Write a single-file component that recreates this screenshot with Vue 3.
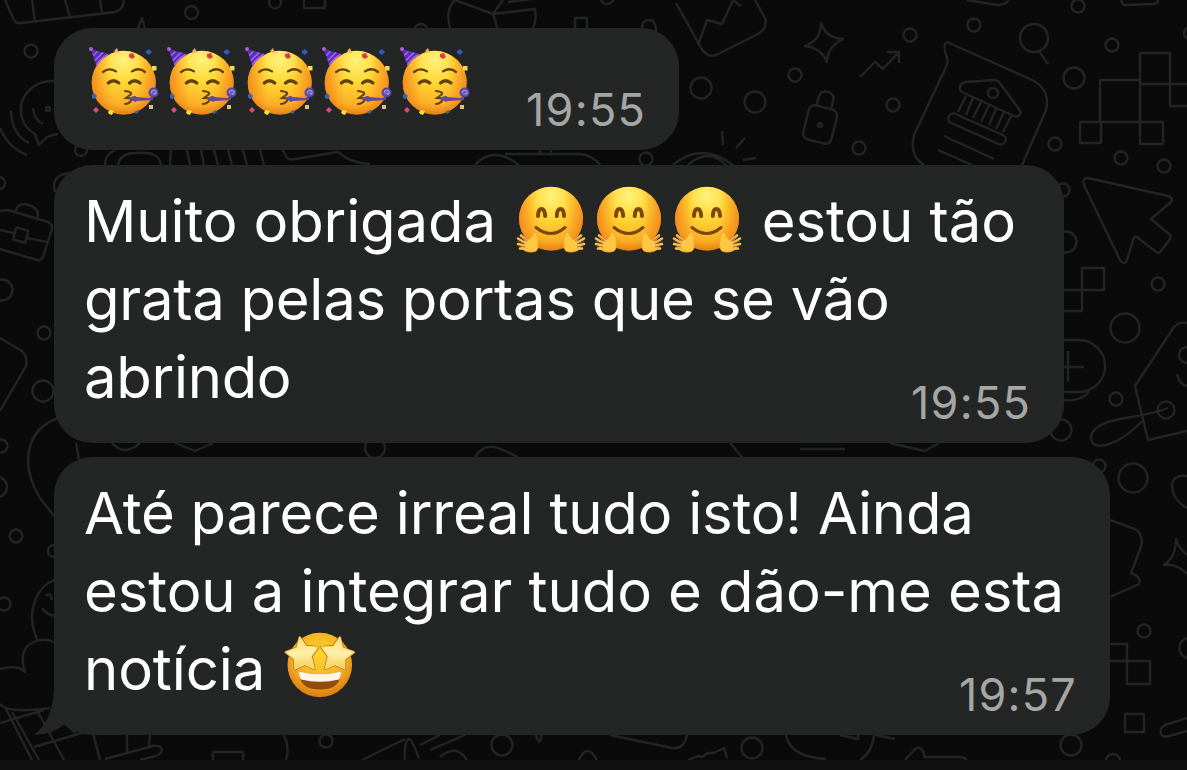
<template>
	<div class="chat">
		<svg class="wallpaper" viewBox="0 0 1187 770" aria-hidden="true">
			<circle v-for="(c, i) in rings" :key="'c' + i" :cx="c[0]" :cy="c[1]" :r="c[2]" />
			<path v-for="(d, i) in doodles" :key="'d' + i" :d="d" />
			<g transform="rotate(14 820 125)">
				<rect x="805.5" y="107" width="29" height="35" rx="6" />
				<path d="M812 107v-8q0-8 7.500-8t7.500 8v8" />
				<circle cx="820" cy="125" r="2" />
			</g>
			<rect x="946" y="124" width="62" height="10" rx="5" transform="rotate(24 977 129)" />
			<rect x="14.500" y="229" width="12.500" height="12.500" transform="rotate(15 21 235)" />
			<circle cx="48" cy="109" r="2" />
		</svg>

		<div class="messages">
			<div v-for="(msg, m) in messages" :key="m" class="bubble" :class="msg.size">
				<div class="text">
					<div v-for="(line, l) in msg.lines" :key="l" class="line">
						<template v-for="(part, p) in line" :key="p">
							<span v-if="part.text" :style="{ letterSpacing: part.space + 'px' }">{{ part.text }}</span>

							<svg v-else-if="part.emoji === 'party'" class="emoji party" viewBox="0 0 78 72">
								<circle cx="37.700" cy="36.700" r="32" fill="url(#face)" />
								<circle cx="37.700" cy="36.700" r="32" fill="url(#cheeks)" />
								<path d="M4.500 3 24 8.300Q15 12 10.700 20.500Z" fill="#5430b8" />
								<path d="M7.300 9.500l4-4M8.800 14.500l8.200-8M10.500 19q4-7 11.500-10.500" fill="none" stroke="#a862e8" stroke-width="1.700" />
								<circle cx="5" cy="3" r="2" fill="#b75bd8" />
								<g fill="none" stroke="#62410b" stroke-width="2.300" stroke-linecap="round">
									<path d="M17 26q6-5 13-.6M46 25.400q7-4.500 13 .6" />
									<path d="M22.300 37q5-4.500 10.500 0M43.500 37q5-4.500 10.500 0" stroke-width="3.300" />
									<path d="M39 45q9 1 5 4l-4 3q8 0 4 4-2 2-5 2" stroke-width="2" />
								</g>
								<path d="m42 52 7-2.200 1.500 1.200L63 52l4-2v4l-16 1-2 1Z" fill="#62489f" />
								<circle cx="67.500" cy="46.500" r="4" fill="#775bb1" stroke="#5148a8" stroke-width="2" />
								<path d="M65 47q0-3 3-3t2 4q-2 1-2-1" fill="none" stroke="#b099d4" />
								<path d="m28 5 3-3 2 5-4-1Z" fill="#efac58" />
								<path d="m43 8 4-1 2 4-3 2-3-2Z" fill="#d93e42" />
								<path d="m60 5 3-2 3 3-3 3-3-2Z" fill="#2e5bc1" />
								<path d="M66 20h4.500v4.500H66Z" fill="#f6dc49" />
								<path d="m6 49 2-2 3 3-2 3-3-1Z" fill="#3865b5" />
								<path d="m7 64 3-3 3 3-3 3Z" fill="#d54e77" />
								<path d="m22 66 2-2 4 1-2 4-3-1Z" fill="#f3df41" />
								<path d="M63 59h4v4h-4Z" fill="#e1bd83" />
								<path d="m48 66 4-2 1 2-3 2Z" fill="#47619b" />
							</svg>

							<svg v-else-if="part.emoji === 'hug'" class="emoji hug" viewBox="0 0 78 72">
								<circle cx="39" cy="34.700" r="32" fill="url(#face)" />
								<circle cx="39" cy="34.700" r="32" fill="url(#cheeks)" />
								<g fill="none" stroke="#7b4706" stroke-linecap="round">
									<path d="M26 32q.3-7 3.500-7t3.700 7M44.800 32q.3-7 3.600-7t3.600 7" stroke-width="4" />
									<path d="M24 43.500q15 12 29 0" stroke-width="3" />
								</g>
								<g v-for="side in [1, -1]" :key="side" :transform="side === 1 ? '' : 'translate(78 0) scale(-1 1)'">
									<path d="M14 57Q21 54 21 48q5 0 5 7 2 13-5 13-9 1-12-5Z" fill="#ffc440" stroke="#e99a20" stroke-width=".6" />
									<path d="M17 59 9 51.500M15 60 6 54.500M15 62 6 60M16 65l-8-.5" fill="none" stroke="#f8bd55" stroke-width="2.600" stroke-linecap="round" />
									<path d="m15 57-6-4M13 60l-7-3M13 63l-6-1" fill="none" stroke="#99621f" stroke-width=".8" />
									<path d="M15 57q6-1 7-8 4 1 3 8 1 9-4 9-6 1-8-3Z" fill="#ffc742" />
								</g>
							</svg>

							<svg v-else class="emoji star" viewBox="0 0 78 72">
								<circle cx="38.800" cy="37" r="32.300" fill="url(#starFace)" />
								<path d="M18 43.500q21 5 42 0 .5 18-21 18T18 43.500Z" fill="#914d0a" />
								<path d="M18 43.500q21 5 42 0 0 6-2 8-19 4.500-38 0-2-2-2-8Z" fill="#fff6e8" />
								<g v-for="side in [1, -1]" :key="side" :transform="side === 1 ? '' : 'translate(77.600 0) scale(-1 1)'">
									<path
										d="m18.700 9.300 6.500 9 11.800.9-6.700 9.200 2.900 12.200-9.800-4.200-9.400 4.600-.3-9.800-9-7 11.200-4.300Z"
										fill="url(#stars)" stroke="#a86a0e" stroke-width="2.600" stroke-linejoin="round"
									/>
									<path
										d="m18.700 9.300 6.500 9 11.800.9-6.700 9.200 2.900 12.200-9.800-4.200-9.400 4.600-.3-9.800-9-7 11.200-4.300Z"
										fill="url(#stars)" stroke="#ffe083" stroke-width="1.300" stroke-linejoin="round"
									/>
								</g>
							</svg>
						</template>
					</div>
				</div>
				<span class="time">{{ msg.time }}</span>
				<svg v-if="msg.tail" class="tail" viewBox="0 0 42 50">
					<path d="M20 0Q20 35 0 49.500q17 1 30-10l12 10V0Z" />
				</svg>
			</div>
		</div>
		<div class="bottom-bar"></div>

		<svg class="defs" width="0" height="0">
			<defs>
				<radialGradient id="face" cx=".5" cy=".15" r=".87">
					<stop offset="0" stop-color="#fff27b" />
					<stop offset=".4" stop-color="#ffd835" />
					<stop offset=".8" stop-color="#fbae26" />
					<stop offset="1" stop-color="#e27c12" />
				</radialGradient>
				<linearGradient id="cheeks">
					<stop offset="0" stop-color="#f06f12" stop-opacity=".6" />
					<stop offset=".3" stop-color="#f77b16" stop-opacity="0" />
					<stop offset=".7" stop-color="#f77b16" stop-opacity="0" />
					<stop offset="1" stop-color="#f06f12" stop-opacity=".6" />
				</linearGradient>
				<radialGradient id="starFace" cx=".5" cy=".35" r=".65">
					<stop offset="0" stop-color="#ffd52d" />
					<stop offset=".65" stop-color="#f4ae24" />
					<stop offset="1" stop-color="#d97a10" />
				</radialGradient>
				<linearGradient id="stars" x2="0" y2="1">
					<stop offset="0" stop-color="#ffdf70" />
					<stop offset=".5" stop-color="#fff1ac" />
					<stop offset="1" stop-color="#f7ca55" />
				</linearGradient>
			</defs>
		</svg>
	</div>
</template>

<script setup>
const party = { emoji: 'party' }
const hug = { emoji: 'hug' }

const messages = [
	{ size: 'short', time: '19:55', lines: [[party, party, party, party, party]] },
	{
		size: 'medium',
		time: '19:55',
		lines: [
			[{ text: 'Muito obrigada ', space: -0.12 }, hug, hug, hug, { text: ' estou tão', space: -0.08 }],
			[{ text: 'grata pelas portas que se vão', space: -0.26 }],
			[{ text: 'abrindo', space: -0.3 }]
		]
	},
	{
		size: 'large',
		time: '19:57',
		tail: true,
		lines: [
			[{ text: 'Até parece irreal tudo isto! Ainda', space: -0.2 }],
			[{ text: 'estou a integrar tudo e dão-me esta', space: -0.07 }],
			[{ text: 'notícia ', space: -0.1 }, { emoji: 'star' }]
		]
	}
]

// x, y, radius
const rings = [
	[191.5, 12.5, 6.5], [275, 2.5, 6], [31, 51, 6.5], [81, 150, 6], [421, 31, 7], [607, -3, 7],
	[701, 88, 10.5], [755, 102, 10.5], [795, 75, 6.5], [646, 159, 6.5], [910, 35, 6.5],
	[974, 25, 6.5], [893, 105, 6.5], [859, 148, 6.5], [1034, 38, 14], [1074, 78, 10.5],
	[1112, 45, 6.5], [1078, 6, 6.5], [1055, 144, 6.5], [1121, 158, 6.5], [1164, 166, 6.5],
	[1063, 190, 6.5], [1066, 242, 10.5], [993, 93, 5], [1158, 284, 6.5], [1125, 328, 14.5],
	[1116, 399, 6.5], [1166, 410, 8.5], [1061, 430, 10.5], [1099, 466, 6.5], [1133, 478, 14.5],
	[1187, 355, 8], [1144, 631, 6.5], [1190, 648, 10.5], [1071, 745, 10.5], [1113, 761, 7],
	[-1, 183, 6], [2, 290, 10.5], [44, 333, 6.5], [43, 391, 10.5], [1, 446, 6.5], [16, 536, 6.5],
	[-3, 487, 10], [4, 604, 6.5], [54, 551, 6], [326, 741, 6.5], [502, 745, 10.5], [752, 748, 10.5],
	[375, 448, 10], [1190, 33, 6]
]

const doodles = [
	'M5 0 14 20q2 4 7 3l94-11q8-2 9-12M32 0l3 22M65 0l5 17M100 0l2 13M304-5h21V8h-21ZM138 28l4-10 3 10',
	'M54 81C35 80 20 95 21 110c0 12 7 20 14 24l4 11 8-8q5-2 11-3M33 108q1 12 10 16M11 111q1 24 18 32M0 128q8 20 27 27',
	'M105 165q0-10 10-15M118 165q2-12 18-12 24-2 25 12M171 150l-1 15M187 150l3 15M201 150l3 15M214 150l4 15M228 150l4 15M243 150l4 15M260 150l4 15M282 148l5 10q2 2 8 1l43-7Q350 163 370 164',
	'M450 28Q445 10 455 0l38 14 42-5q2 11-2 19M493 14q3 8 4 14M493 14l10-14M508 2l32-4M575 28V18h12v10M642 28q0-8 7-8t7 12',
	'M676 3l24 43q6 12 16 9l42-21q10-6 7-16L755 0M698 45l9-25 15 4L733 0l8 6',
	'M722 131l1 14M745 138l-9 10M743 160l13-2M475 165q18-20 44 0M505 154h75q12 1 20 11M540 150v4M551 150v4M673 165q28-24 60 0M688 165q20-18 38 0',
	'M821 23q5 15 22 16-16 8-16 23-6-14-22-16 16-6 16-23ZM860 77l15-15 8 7 16-17M887 52h12v11M1039 51l9 13',
	'M967 0l30 5q8 0 12-5M1121 0q1 6 6 5l27-1q4-1 4-4',
	'M947 42l85 38q19 10 14 30l-24 55M947 42q-4 2-1 13 3 6 0 12l-32 68q-5 21 10 30',
	'M960 86q1-3 6-4l28-2q4 0 6 3l21 29q-2 6-7 4L962 92q-3-2-2-6Z',
	'M966 96l-8 16M973 98l-7 17M981 102l-8 16M989 105l-8 17M996 109l-7 16M1004 112l-8 17M1011 116l-8 16M944 136l50 23M938 150l34 15',
	'M1140 53h30v31h-30ZM1100 80h40v42h-40ZM1140 84v38M1170 84h20v22h-20ZM1080 122h21v21h-21ZM1140 122h23v22h-23Z',
	'M1088 178l80 18q6 2 3 6l-20 17 18 15q3 2 1 5l-9 12q-3 4-6 0l-18-14q-3-2-4 3l-6 20q-3 6-7 0l-36-75q-2-7 4-7Z',
	'M1064 290h18v-22h22v22h-22v21h-18M1064 340h15a26 26 0 0 1 0 52h-15M1064 400q16 2 25-8M1068 351v31M1060 367h24',
	'M1187 323q-10-2-15 7l-37 56 13 54 39-9M1177 374q2 10 10 12M1168 408c-28 12-68 7-77 27-2 20 29 10 51-14',
	'M1187 476q-15-2-15 11 1 13 15 21M1110 520l25 9q9 5 6 18l-10 26q11 4 8 11l-29 13',
	'M1187 555q-10-9-11-16 0 18-12 26 13-2 23 9M1110 644h17v17h-17M1127 661h23v23h-23ZM1125 714h19v18h-19ZM1187 718l-22 7q-6 4-4 9 2 4 8 2l18-5',
	'M0 211l8-1 40 12q5 3 4 7l-9 28q-2 4-6 3L0 249M0 230l14 3M27 238l20 4M16 211q0-7 10-7 12 3 12 11l-1 4',
	'M0 338l22 13q6 6 4 15L0 411M58 418C25 430 20 465 40 498l14 18M76 443l3 17h35M55 192q-5-17 15-19',
	'M54 580c-19 8-29 35-16 61M42 608q4 6 12 8M46 596q4-5 6 4M0 669q18-5 25 3-7-22 7-29 10-6 22-1M0 704q8 10 50 4',
	'M0 723l44-13M5 707l27 53M12 712l27 48M38 712l26 48M34 747l51-15M93 733l7 27M105 759l48-13q8-1 9 4-1 4-6 6l-16 4M127 735v17M150 735l-1 12M213 760v-8h30v8M284 735q6 12 2 25',
	'M362 760l43-21M405 760q-1-20 4-21 4 2 10 20M420 745l20-10M430 750l35-15M440 757q16-14 27 3M536 735q2 8 4 6l2-6M579 760q8-18 18 0',
	'M610 735l62 13q12 2 15-13M688 760l10-4 4 1 6-4 6 0 10-5 3 10M786 735q4 22 40 24M874 735q-2 18-14 25M905 760l10-11q7-4 9 5v3h35q5 0 8 3M840 735l18 4v-4M875 735l20 4',
	'M112 443q12 14 28 0M175 443l20 8 18-8M475 457q10-16 28-7l15 7M730 443l12 14M800 449h45M890 443l35 8 14-8'
]
</script>

<style scoped>
.chat {
	position: relative;
	width: 1187px;
	height: 770px;
	overflow: hidden;
	background: #0a0a0a;
	font-family: Inter, "Liberation Sans", sans-serif;
}

.wallpaper {
	position: absolute;
	inset: 0;
	width: 1187px;
	height: 770px;
	fill: none;
	stroke: #232424;
	stroke-width: 2.4;
	stroke-linejoin: round;
}

.messages {
	position: relative;
	display: flex;
	flex-direction: column;
	align-items: flex-start;
	gap: 14.5px;
	padding: 28px 0 0 54px;
}

.bubble {
	position: relative;
	box-sizing: border-box;
	height: 278px;
	padding: 17px 30px 0;
	border-radius: 38px;
	background: #242625;
	color: #fff;
}

.bubble.short {
	width: 625px;
	height: 122px;
	padding-left: 32px;
}

.bubble.medium {
	width: 1010px;
}

.bubble.large {
	width: 1056px;
}

.line {
	height: 78px;
	line-height: 78px;
	font-size: 58px;
	white-space: pre;
	display: flex;
}

.emoji {
	flex: none;
	width: 78px;
	height: 72px;
	overflow: visible;
}

.party {
	margin: 1px -0.2px 0 0;
}

.hug {
	margin: 2px -0.2px 0 0;
}

.star {
	margin-top: -2px;
}

.time {
	position: absolute;
	right: 33px;
	bottom: 13px;
	color: #a5a6a6;
	font-size: 45px;
	line-height: 54px;
	letter-spacing: 1.2px;
}

.tail {
	position: absolute;
	left: -20px;
	bottom: 0;
	width: 42px;
	height: 50px;
	fill: #242625;
}

.bottom-bar {
	position: absolute;
	right: 0;
	bottom: 0;
	left: 0;
	height: 10px;
	background: #111;
}

.defs {
	position: absolute;
}
</style>

<style>
body {
	margin: 0;
	background: #0a0a0a;
}
</style>
